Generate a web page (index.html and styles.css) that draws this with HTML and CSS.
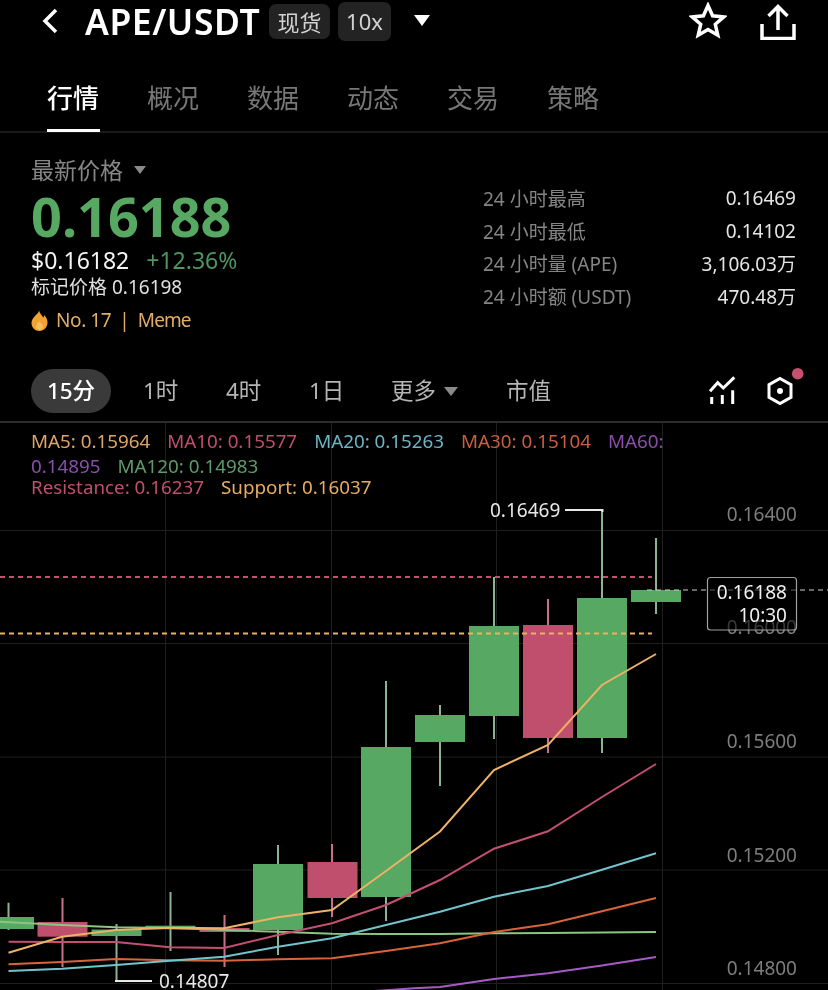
FILE: index.html
```html
<!DOCTYPE html>
<html lang="zh-CN">
<head>
<meta charset="utf-8">
<title>APE/USDT</title>
<link rel="stylesheet" href="styles.css">
</head>
<body>
<main class="app">
  <header class="topbar">
    <svg class="back" width="16" height="26" viewBox="0 0 16 26"><path d="M14 2 3 13l11 11"/></svg>
    <h1 class="pair">APE/USDT</h1>
    <span class="tag tag-spot">现货</span>
    <span class="tag tag-lev">10x</span>
    <span class="caret-white"></span>
    <svg class="star" width="38" height="37" viewBox="0 0 38 37"><path d="M19 3.500l4.600 10.300 11.200 1.100-8.500 7.400 2.500 11-9.800-5.700-9.800 5.700 2.500-11-8.500-7.400 11.200-1.100z"/></svg>
    <svg class="share" width="36" height="37" viewBox="0 0 36 37"><path d="M2 21v14.500h32V21M18 27V4M8.500 13 18 3.500 27.500 13"/></svg>
  </header>

  <nav class="tabs">
    <a class="tab tab-on">行情</a><a class="tab">概况</a><a class="tab">数据</a><a class="tab">动态</a><a class="tab">交易</a><a class="tab">策略</a>
  </nav>

  <section class="summary">
    <div class="price-col">
      <div class="latest-label">最新价格<span class="caret-grey caret-small"></span></div>
      <div class="last-price">0.16188</div>
      <div class="sub-price"><span class="usd">$0.16182</span><span class="change">+12.36%</span></div>
      <div class="mark">标记价格 0.16198</div>
      <div class="rank">
        <svg class="flame" width="17" height="21" viewBox="0 0 17 21"><path d="M8 .500c1 3.200 2.800 4.800 4.400 7 .6-.7.900-1.500.900-2.500 2.200 2.500 3.200 5.300 3.200 7.500 0 4.800-3.600 8.500-8 8.500S.500 17.500.500 13c0-3 1.500-5 3.500-7 2-2 3.800-3.500 4-5.500z"/><path class="flame-core" d="M8.500 11c.6 1.800 3.500 3 3.500 5.600 0 2-1.600 3.400-3.500 3.400S5 18.600 5 16.600C5 14 7.800 13 8.500 11z"/></svg>
        <span class="rank-no">No. 17</span><span class="rank-sep">|</span><span class="rank-cat">Meme</span>
      </div>
    </div>
    <dl class="stats">
      <div class="stat"><dt>24 小时最高</dt><dd>0.16469</dd></div>
      <div class="stat"><dt>24 小时最低</dt><dd>0.14102</dd></div>
      <div class="stat"><dt>24 小时量 (APE)</dt><dd>3,106.03万</dd></div>
      <div class="stat"><dt>24 小时额 (USDT)</dt><dd>470.48万</dd></div>
    </dl>
  </section>

  <div class="intervals">
    <span class="iv iv-on">15分</span>
    <span class="iv iv-1h">1时</span>
    <span class="iv iv-4h">4时</span>
    <span class="iv iv-1d">1日</span>
    <span class="iv iv-more">更多<span class="caret-grey"></span></span>
    <span class="iv iv-cap">市值</span>
    <svg class="ico-ind" width="30" height="28" viewBox="0 0 30 28"><path d="M2 15.300 9.700 6.700 15.300 12 26.300 1.300M3.700 28v-7M14.300 28v-9M24.700 28V14.300"/></svg>
    <svg class="ico-set" width="40" height="40" viewBox="0 0 40 40"><path d="M15 11.500 26 17.700v12.600L15 36.500 4 30.300V17.700z"/><circle class="ico-dot" cx="15" cy="24" r="3"/><circle class="ico-badge" cx="32.700" cy="6.700" r="5.800"/></svg>
  </div>

  <section class="chart">
    <svg class="plot" width="828" height="567" viewBox="0 423 828 567">
      <g class="grid">
        <path d="M165.500 423V990M331.500 423V990M496.500 423V990M662.500 423V990M0 530.500H828M0 643.500H828M0 757H828M0 870H828M0 983.500H828"/>
      </g>
      <g class="wick-up">
        <path d="M8.500 902.700V930M116.500 924V981M170.500 892V951M278 845V955M386 681V921M440 705V786M494 577V739M602 510V753M656 538V614"/>
      </g>
      <g class="wick-down">
        <path d="M62.500 898V967M224.500 915V967M332 844V917M548 599V753"/>
      </g>
      <g class="body-up">
        <rect x="-16" y="917" width="50" height="12"/>
        <rect x="91.500" y="929.500" width="50" height="6.500"/>
        <rect x="145.500" y="925.700" width="50" height="3.600"/>
        <rect x="253" y="864" width="50" height="66"/>
        <rect x="361" y="747" width="50" height="150"/>
        <rect x="415" y="715" width="50" height="27"/>
        <rect x="469" y="626" width="50" height="90"/>
        <rect x="577" y="598" width="50" height="140"/>
        <rect x="631" y="590" width="50" height="12"/>
      </g>
      <g class="body-down">
        <rect x="37.500" y="922" width="50" height="14.700"/>
        <rect x="199.500" y="928" width="50" height="4"/>
        <rect x="307.500" y="862" width="50" height="36"/>
        <rect x="523" y="625" width="50" height="113"/>
      </g>
      <line class="dash dash-res" x1="0" y1="577" x2="652" y2="577"/>
      <line class="dash dash-sup" x1="0" y1="633.500" x2="652" y2="633.500"/>
      <line class="dash dash-now" x1="647" y1="590" x2="828" y2="590"/>
      <polyline class="ma ma120" points="0,921.700 62,925 116,927.300 170,928 224,930 278,931.700 332,933.700 386,934 440,934 494,933.300 548,933 602,932.500 656,932"/>
      <polyline class="ma ma60" points="360,992 414,988.300 440,987 494,979 548,973.300 602,965.500 656,957"/>
      <polyline class="ma ma30" points="8.500,964.300 62,962 116,959 170,960.300 224,960.700 278,959.300 332,958.300 386,951 440,943.300 494,932 548,924.300 602,911.300 656,898"/>
      <polyline class="ma ma20" points="8.500,971 62,968.700 116,965 170,960.700 224,956.700 278,946.700 332,938.300 386,925 440,911.700 494,896.700 548,886 602,869.700 656,853.300"/>
      <polyline class="ma ma10" points="8.500,941.700 62,942 116,942 170,947.300 224,948 278,935 332,923.300 386,905 440,880 494,848.700 548,831.300 602,797 656,764"/>
      <polyline class="ma ma5" points="8.500,952.700 62,936.700 116,930 170,927.700 224,928.300 278,917.300 332,910 386,871 440,831.500 494,770 548,745 602,685 656,654"/>
      <path class="mark-line" d="M565 510H602.500V512M115 981H152"/>
      <text class="mark-text" x="490" y="516.500">0.16469</text>
      <text class="mark-text" x="159" y="987.500">0.14807</text>
      <text class="axis" x="797" y="520.500">0.16400</text>
      <text class="axis" x="797" y="634">0.16000</text>
      <text class="axis" x="797" y="747.500">0.15600</text>
      <text class="axis" x="797" y="861.500">0.15200</text>
      <text class="axis" x="797" y="974.500">0.14800</text>
      <rect class="now-box" x="707.500" y="577.500" width="89" height="52.500" rx="3"/>
      <text class="now-text" x="787" y="598.500">0.16188</text>
      <text class="now-text" x="787" y="621.500">10:30</text>
    </svg>
    <div class="legend">
      <p class="legend-row legend-r1"><span class="c-ma5">MA5: 0.15964</span><span class="c-ma10">MA10: 0.15577</span><span class="c-ma20">MA20: 0.15263</span><span class="c-ma30">MA30: 0.15104</span><span class="c-ma60">MA60:</span></p>
      <p class="legend-row legend-r2"><span class="c-ma60">0.14895</span><span class="c-ma120">MA120: 0.14983</span></p>
      <p class="legend-row legend-r3"><span class="c-ma10">Resistance: 0.16237</span><span class="c-sup">Support: 0.16037</span></p>
    </div>
  </section>
</main>
</body>
</html>
```

FILE: styles.css
```css
* { box-sizing: border-box; }
html, body { margin: 0; padding: 0; background: #000; }
body {
  font-family: "Noto Sans", "Noto Sans CJK SC", sans-serif;
  color: #fff;
  width: 828px;
  height: 990px;
  overflow: hidden;
}
.app { width: 828px; height: 990px; display: flex; flex-direction: column; filter: blur(.35px); }

/* top bar */
.topbar { height: 42px; display: flex; align-items: center; padding-left: 42px; flex: none; }
.back { fill: none; stroke: #fff; stroke-width: 3.500; margin-right: 27px; }
.pair { margin: 0 9px 0 0; width: 175px; font-size: 35.500px; font-weight: 600; line-height: 42px; letter-spacing: .55px; white-space: nowrap; }
.tag { background: #232323; border-radius: 7px; color: #d2d2d2; font-size: 22px; display: flex; align-items: center; justify-content: center; }
.tag-spot { width: 61px; height: 35px; }
.tag-lev { width: 53px; height: 39px; margin-left: 8px; }
.caret-white { width: 0; height: 0; border-left: 8.500px solid transparent; border-right: 8.500px solid transparent; border-top: 11px solid #fff; margin-left: 23px; margin-top: -1px; }
.star { fill: none; stroke: #fff; stroke-width: 3.500; margin-left: auto; margin-top: -2px; }
.share { fill: none; stroke: #fff; stroke-width: 3.500; margin-left: 33px; margin-right: 32px; }

/* tabs */
.tabs { height: 91px; display: flex; gap: 47px; padding-left: 47px; border-bottom: 2px solid #1a1a1a; flex: none; }
.tab { width: 53px; height: 90px; font-size: 26px; line-height: 30px; color: #777; padding-top: 41px; white-space: nowrap; }
.tab-on { color: #fff; font-weight: 500; border-bottom: 3px solid #fff; }

/* summary */
.summary { height: 219px; display: flex; justify-content: space-between; padding: 0 32px 0 31px; flex: none; }
.latest-label { font-size: 23px; line-height: 30px; color: #868686; margin-top: 22px; display: flex; align-items: center; }
.caret-grey { display: inline-block; width: 0; height: 0; border-left: 7px solid transparent; border-right: 7px solid transparent; border-top: 9px solid #8a8a8a; }
.caret-small { border-left-width: 6px; border-right-width: 6px; border-top-width: 8px; margin-left: 11px; }
.last-price { font-size: 54px; font-weight: 700; line-height: 56px; color: #57a862; margin-top: 3px; }
.sub-price { display: flex; gap: 17px; font-size: 23px; line-height: 28px; margin-top: 2px; }
.usd { color: #f4f4f4; }
.change { color: #4e9660; }
.mark { font-size: 19px; line-height: 24px; color: #e0e0e0; margin-top: 1px; }
.rank { display: flex; align-items: center; font-size: 19px; line-height: 28px; color: #e2ad66; margin-top: 7px; }
.flame { fill: #f0a232; margin-right: 8px; }
.flame-core { fill: #f6bf5e; }
.rank-no { letter-spacing: -.4px; }
.rank-cat { letter-spacing: -.9px; }
.rank-sep { margin: 0 8px; }

.stats { margin: 48.700px 0 0; display: flex; flex-direction: column; }
.stat { display: flex; justify-content: space-between; width: 313px; height: 32.700px; align-items: center; }
.stat dt { font-size: 19px; color: #858585; }
.stat dd { margin: 0; font-size: 19px; color: #e4e4e4; }

/* intervals */
.intervals { height: 71px; display: flex; align-items: flex-start; border-bottom: 2px solid #2c2c2c; flex: none; padding-left: 31px; }
.iv { font-size: 22.500px; line-height: 44px; color: #b5b5b5; white-space: nowrap; margin-top: 17px; }
.iv-on { width: 80px; height: 44px; border-radius: 22px; background: #3a3a3a; color: #fff; font-weight: 500; text-align: center; }
.iv-1h { margin-left: 32px; width: 34px; }
.iv-4h { margin-left: 49px; width: 34px; }
.iv-1d { margin-left: 49px; width: 34px; }
.iv-more { margin-left: 48px; width: 68px; display: flex; align-items: center; }
.iv-more .caret-grey { margin-left: 8px; }
.iv-cap { margin-left: 47px; }
.ico-ind { fill: none; stroke: #fff; stroke-width: 3; margin-left: auto; margin-top: 24px; }
.ico-set { fill: none; stroke: #fff; stroke-width: 3; margin-left: 27px; margin-right: 23px; margin-top: 15px; overflow: visible; }
.ico-dot { fill: #fff; stroke: none; }
.ico-badge { fill: #c65070; stroke: none; }

/* chart */
.chart { position: relative; flex: 1; min-height: 0; }
.plot { display: block; }
.grid path { fill: none; stroke: #1f1f1f; stroke-width: 1; }
.wick-up path { fill: none; stroke: #8ab592; stroke-width: 2; }
.wick-down path { fill: none; stroke: #c8708a; stroke-width: 2; }
.body-up rect { fill: #56a862; }
.body-down rect { fill: #bf4f6c; }
.dash { stroke-width: 2; stroke-dasharray: 5 4; }
.dash-res { stroke: #c8506e; }
.dash-sup { stroke: #eeb25e; }
.dash-now { stroke: #d0d0d0; stroke-width: 1.200; }
.ma { fill: none; stroke-width: 2; }
.ma5 { stroke: #eeb266; }
.ma10 { stroke: #c44f72; }
.ma20 { stroke: #72c4cc; }
.ma30 { stroke: #d8643c; }
.ma60 { stroke: #a45cc4; }
.ma120 { stroke: #8cc484; }
.mark-line { fill: none; stroke: #e8e8e8; stroke-width: 2; }
.mark-text, .axis, .now-text { font-family: "Noto Sans", sans-serif; font-size: 19px; }
.mark-text { fill: #e8e8e8; }
.axis { fill: #7d7d7d; text-anchor: end; }
.now-box { fill: #000; fill-opacity: .55; stroke: #a0a0a0; stroke-width: 1.200; }
.now-text { fill: #f0f0f0; text-anchor: end; }

.legend { position: absolute; left: 31px; top: 5px; width: 680px; font-size: 18.800px; }
.legend-row { margin: 0; display: flex; gap: 17px; white-space: nowrap; }
.legend-r1 { line-height: 26px; }
.legend-r2 { line-height: 24px; }
.legend-r3 { line-height: 19px; }
.c-ma5 { color: #e0a468; }
.c-ma10 { color: #bf4f6c; }
.c-ma20 { color: #6db5c4; }
.c-ma30 { color: #c85f40; }
.c-ma60 { color: #8a4fa8; }
.c-ma120 { color: #5f9a6c; }
.c-sup { color: #e8ac60; }
```
